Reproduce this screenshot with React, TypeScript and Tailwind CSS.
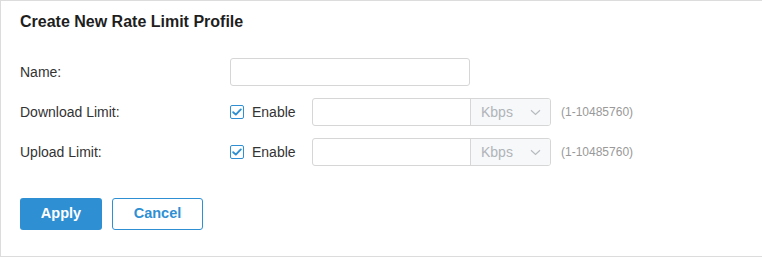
import React from "react";

function Check() {
  return (
    <span className="flex h-[14px] w-[14px] items-center justify-center rounded-[2px] border border-[#2f8fd3] bg-white">
      <svg width="10" height="8" viewBox="0 0 10 8" fill="none">
        <path d="M1.2 4.2 L3.8 6.6 L8.8 1.4" stroke="#2f8fd3" strokeWidth="1.9" strokeLinecap="round" strokeLinejoin="round" />
      </svg>
    </span>
  );
}

function LimitRow({ label }: { label: string }) {
  return (
    <div className="flex h-[28px] items-center">
      <div className="w-[210px] text-[14px] text-[#333]">{label}</div>
      <label className="flex w-[82px] items-center gap-[8px]">
        <Check />
        <span className="text-[14px] text-[#333]">Enable</span>
      </label>
      <div className="flex h-[28px] w-[239px] overflow-hidden rounded-[3px] border border-[#d6d6d6]">
        <input className="h-full w-[158px] border-r border-[#d6d6d6] px-2 text-[14px] outline-none" />
        <div className="flex flex-1 items-center justify-between bg-[#f7f8fa] pl-[10px] pr-[9px]">
          <span className="text-[14px] text-[#b0b4b8]">Kbps</span>
          <svg width="11" height="7" viewBox="0 0 11 7" fill="none">
            <path d="M1 1.2 L5.5 5.5 L10 1.2" stroke="#b8bcc0" strokeWidth="1.2" />
          </svg>
        </div>
      </div>
      <span className="ml-[10px] text-[12px] text-[#999]">(1-10485760)</span>
    </div>
  );
}

export default function App() {
  return (
    <div className="w-[762px] bg-white" style={{ fontFamily: '"Liberation Sans", Arial, sans-serif' }}>
      <div className="box-border h-[257px] w-[780px] border-b border-l border-t border-[#dcdcdc] px-[19px] pt-[9px]">
        <h1 className="text-[16px] font-bold leading-[24px] text-[#1e1e1e]">Create New Rate Limit Profile</h1>
        <div className="mt-[24px] flex flex-col gap-[12px]">
          <div className="flex h-[28px] items-center">
            <div className="w-[210px] text-[14px] text-[#333]">Name:</div>
            <input className="box-border h-[28px] w-[240px] rounded-[3px] border border-[#d6d6d6] px-2 text-[14px] outline-none" />
          </div>
          <LimitRow label="Download Limit:" />
          <LimitRow label="Upload Limit:" />
        </div>
        <div className="mt-[32px] flex gap-[10px]">
          <button className="h-[32px] w-[82px] rounded-[3px] bg-[#2f8fd3] text-[14.5px] font-bold text-white">Apply</button>
          <button className="box-border h-[32px] w-[91px] rounded-[3px] border border-[#2f8fd3] bg-white text-[14.5px] font-bold text-[#2f8fd3]">Cancel</button>
        </div>
      </div>
    </div>
  );
}
